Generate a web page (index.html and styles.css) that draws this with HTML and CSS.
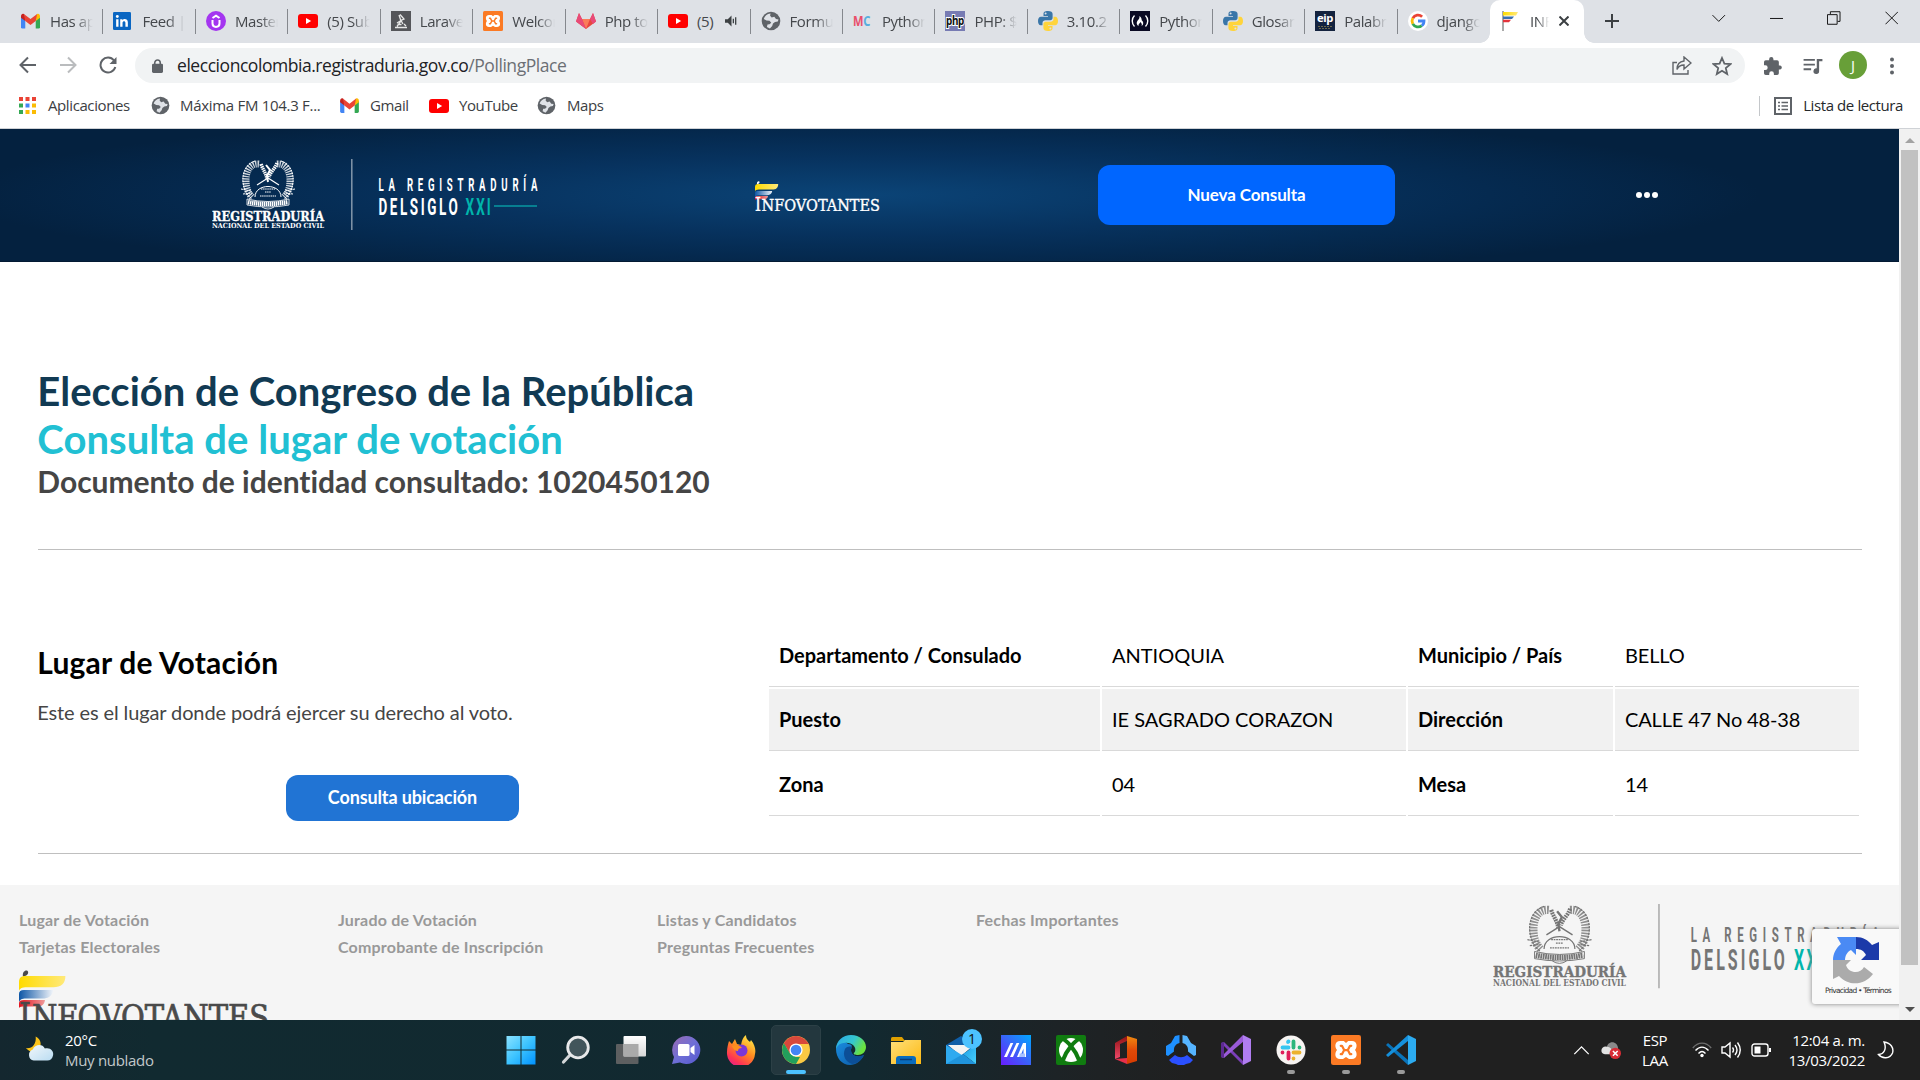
FILE: index.html
```html
<!DOCTYPE html>
<html lang="es">
<head>
<meta charset="utf-8">
<title>INFOVOTANTES</title>
<link rel="stylesheet" href="styles.css">
</head>
<body>
<svg class="defs" aria-hidden="true">
  <defs>
    <linearGradient id="gYellow"><stop offset="0" stop-color="#ffdb00"/><stop offset="1" stop-color="#ffe97a"/></linearGradient>
    <linearGradient id="gBlue"><stop offset="0" stop-color="#0d56a6"/><stop offset="1" stop-color="#f3f6fa"/></linearGradient>
    <linearGradient id="gRed"><stop offset="0" stop-color="#e3141e"/><stop offset="1" stop-color="#ef9a9a"/></linearGradient>
    <linearGradient id="gWin" x2="1" y2="1"><stop offset="0" stop-color="#8be3ff"/><stop offset=".5" stop-color="#3cc3ff"/><stop offset="1" stop-color="#0092ff"/></linearGradient>
    <linearGradient id="gView" x2="0" y2="1"><stop offset="0" stop-color="#fff"/><stop offset="1" stop-color="#d6d6d6"/></linearGradient>
    <linearGradient id="gChat" x2="1" y2="1"><stop offset="0" stop-color="#9a6bb0"/><stop offset=".5" stop-color="#6f6fd6"/><stop offset="1" stop-color="#5558cf"/></linearGradient>
    <linearGradient id="gFox" x1=".8" x2=".2" y2="1"><stop offset="0" stop-color="#fff04a"/><stop offset=".45" stop-color="#ff8a1f"/><stop offset=".8" stop-color="#ff3355"/><stop offset="1" stop-color="#e0208c"/></linearGradient>
    <linearGradient id="gEdge" x2="1" y2=".4"><stop offset="0" stop-color="#2aa7e8"/><stop offset=".6" stop-color="#35c6cf"/><stop offset="1" stop-color="#6be23f"/></linearGradient>
    <linearGradient id="gEdge2" x2="1" y2="1"><stop offset="0" stop-color="#1a8de0"/><stop offset="1" stop-color="#0c59a4"/></linearGradient>
    <linearGradient id="gFold" x2="1" y2="1"><stop offset="0" stop-color="#ffe07a"/><stop offset="1" stop-color="#fdb913"/></linearGradient>
    <linearGradient id="gMail" x2="1" y2="1"><stop offset="0" stop-color="#1d9ce6"/><stop offset="1" stop-color="#48d1fb"/></linearGradient>
    <linearGradient id="gArm" x1="0" y1="1" x2="1" y2="0"><stop offset="0" stop-color="#6a1cff"/><stop offset=".5" stop-color="#3a62f8"/><stop offset="1" stop-color="#00a8ff"/></linearGradient>
    <linearGradient id="gOff" x2="0" y2="1"><stop offset="0" stop-color="#ef8a10"/><stop offset=".5" stop-color="#e04a08"/><stop offset="1" stop-color="#d83b01"/></linearGradient>
    <linearGradient id="gOff2" x2="0" y2="1"><stop offset="0" stop-color="#8e1212"/><stop offset="1" stop-color="#f0486a"/></linearGradient>
    <linearGradient id="gCloud" x2="1" y2="1"><stop offset="0" stop-color="#f2f7fa"/><stop offset="1" stop-color="#b9dcf2"/></linearGradient>

    <symbol id="gmail" viewBox="0 0 20 16"><path fill="#4285f4" d="M0 3v11.5A1.500 1.500 0 0 0 1.500 16H4.500V6z"/><path fill="#34a853" d="M20 3v11.500a1.500 1.500 0 0 1-1.500 1.500h-3V6z"/><path fill="#c5221f" d="M0 3v1.500L4.500 8V3L3 .6C1.500-.3 0 1 0 3z"/><path fill="#fbbc04" d="M20 3v1.500L15.500 8V3L17 .6c1.500-.9 3 .4 3 2.400z"/><path fill="#ea4335" d="M3 .6 10 6l7-5.400L15.500 8 10 12.200 4.500 8z"/></symbol>
    <symbol id="youtube" viewBox="0 0 20 14"><rect width="20" height="14" rx="3" fill="#f00"/><path fill="#fff" d="m8 4 5.200 3L8 10z"/></symbol>
    <symbol id="globe" viewBox="0 0 20 20"><circle cx="10" cy="10" r="9.300" fill="#5f6368"/><path fill="#dfe2e7" d="M9.500 2.500C6 2.800 3.500 5 2.800 8l2.700 1.500 3 .3 1.800 1.900-1.800 1.600-2 .2-.6 2.500 3 1.500 2.300-2.500.8-2.500 2-1.500 2.800-.4.7-2.200-2.500-.3-1.700-2.400-2.600.8-1.600-1.700z"/></symbol>
    <symbol id="linkedin" viewBox="0 0 20 20"><rect width="20" height="20" rx="1.500" fill="#0a66c2"/><path fill="#fff" d="M3.500 8h2.600v8.500H3.500zM8 8h2.500v1.200c1.500-2.200 6-1.800 6 2.300v5h-2.700V12c0-2.600-3.200-2.200-3.200 0v4.500H8z"/><circle cx="4.800" cy="5" r="1.600" fill="#fff"/></symbol>
    <symbol id="udemy" viewBox="0 0 20 20"><circle cx="10" cy="10" r="10" fill="#a435f0"/><path fill="none" stroke="#fff" stroke-width="2" d="M6.500 9v3.500c0 4.500 7 4.500 7 0V9M6.500 7 10 4.600 13.500 7"/></symbol>
    <symbol id="lab" viewBox="0 0 20 20"><path fill="#55565a" d="M0 0h20v20H0z"/><path fill="none" stroke="#e8e8e8" stroke-width="1.300" d="M9 3.500 13 8l-3 1.500 2 3.500M8 4l2 6-4 5.500M4 16.500h12M10 9.500 6 12M13 13l2 2M6.500 13.500h4"/></symbol>
    <symbol id="xampp" viewBox="0 0 20 20"><rect width="20" height="20" rx="1.500" fill="#fb7a24"/><path fill="#fff" d="M6 4h2.500L10 5.300 11.500 4H14c3.500 0 3.800 4 2 6 1.800 2 1.500 6-2 6h-2L10 14.700 8 16H6c-3.500 0-3.800-4-2-6C2.200 8 2.500 4 6 4z"/><path fill="none" stroke="#fb7a24" stroke-width="1.500" stroke-linecap="round" stroke-linejoin="round" d="M6.500 7.200h.8L8.800 10l-1.500 2.800h-.8M13.500 7.200h-.8L11.200 10l1.500 2.800h.8M8.800 10h2.400"/></symbol>
    <symbol id="gitlab" viewBox="0 0 20 16"><path fill="#e8463f" d="M10 16 0 8.500 3 0l3 6h8l3-6 3 8.500z"/><path fill="#fb7c5a" d="M10 16 6 6h8z"/><path fill="#e84a78" d="M3 0 0 8.500 10 16 6 6zM17 0l3 8.500-3 2.500-3-5z"/></symbol>
    <symbol id="python" viewBox="0 0 20 20"><path fill="#3a76a8" d="M10 0C6.500 0 5.500 1.200 5.500 3v2H10v.8H3C1 5.800 0 7.500 0 10s1 4.300 2.700 4.300h1.800V12c0-1.800 1.300-2.800 3-2.800h4.800c1.400 0 2.300-1 2.300-2.400V3C14.600 1 13 0 10 0zM7.600 1.500a1 1 0 1 1 0 2 1 1 0 0 1 0-2z" fill-rule="evenodd"/><path fill="#ffd43b" d="M10 20c3.500 0 4.500-1.200 4.500-3v-2H10v-.8h7c2 0 3-1.700 3-4.200s-1-4.300-2.700-4.300h-1.800V8c0 1.800-1.300 2.800-3 2.800H7.700c-1.400 0-2.300 1-2.300 2.400V17c0 2 1.600 3 4.600 3zm2.400-1.500a1 1 0 1 1 0-2 1 1 0 0 1 0 2z" fill-rule="evenodd"/></symbol>
    <symbol id="fcc" viewBox="0 0 20 20"><path fill="#0a0a23" d="M0 0h20v20H0z"/><path fill="none" stroke="#fff" stroke-width="1.400" d="M4.500 4.500c-3 3-3 8 0 11M15.500 4.500c3 3 3 8 0 11"/><path fill="#fff" d="M8.500 15C5.500 13 7 10 8.500 8.500 9.500 7.500 9.700 6 9.300 5c2.200 1.200 2.400 3.200 2.400 4.200C14 11 13.500 14 11.500 15c1-2-.3-3-1-4-.5 1.500-2.500 2-2 4z"/></symbol>
    <symbol id="google" viewBox="0 0 20 20"><circle cx="10" cy="10" r="10" fill="#fff"/><g fill="none" stroke-width="2.800"><path stroke="#ea4335" d="M4.800 7.200a6 6 0 0 1 9.300-1.500"/><path stroke="#fbbc05" d="M4.800 7.200a6 6 0 0 0 0 5.600"/><path stroke="#34a853" d="M4.800 12.800a6 6 0 0 0 9 1.800"/><path stroke="#4285f4" d="M10 10h6c0 2-.8 3.700-2.200 4.600"/></g></symbol>
    <symbol id="flag" viewBox="0 0 16 20"><path stroke="#555" d="M1 0v20"/><path fill="url(#gYellow)" d="M1 1h15l-2 3.500H1z"/><path fill="#3a6fb0" d="M1 5.500h11L10 8H1z"/><path fill="#e3343c" d="M1 8.800h8l-2 2.400H1z"/></symbol>

    <symbol id="infovotantes" viewBox="0 0 125 30">
      <path fill="currentColor" d="M2 3.500C1.500 1 3 0 4 .3c.9.400.7 1.800-.2 2.300z"/>
      <path fill="url(#gYellow)" d="M0 11V6c0-2 1-3 3-3h20.200c0 4-2.200 5.600-6 5.600H4C1.500 8.600 0 9.300 0 11z"/>
      <path fill="url(#gBlue)" d="M0 16.500V12c0-1.300.8-2 2.500-2h14.700c-.5 3-2.500 4.300-5.500 4.300H3.500C1.500 14.300 0 15 0 16.500z"/>
      <path fill="url(#gRed)" d="M0 19v-2.300C0 15.500.8 15 2.500 15H13c-.3 2.300-1.600 3.300-4 3.300H3c-1.500 0-2.500 0-3 .7z"/>
      <g fill="currentColor" stroke="currentColor" stroke-width=".35" font-family="'DejaVu Serif Condensed','DejaVu Serif',serif">
        <text x="0" y="29.500" font-size="18.500" textLength="6" lengthAdjust="spacingAndGlyphs">I</text>
        <text x="6.500" y="29.500" font-size="16.300" textLength="118.500" lengthAdjust="spacingAndGlyphs">NFOVOTANTES</text>
      </g>
    </symbol>

    <symbol id="registraduria" viewBox="0 0 326 72">
      <g fill="none" stroke="currentColor">
        <path stroke-width="7" stroke-dasharray="1.400 1" opacity=".8" d="M47 5C37 4 34 14 34 21c0 8 2 13 6 17M65 5c10-1 13 9 13 16 0 8-2 13-6 17"/>
        <path stroke-width="1" stroke-dasharray="2 .7" d="M43 2c-9 3-13 12-12 21s5 14 9 17M69 2c9 3 13 12 12 21s-5 14-9 17M29 30l10 2M83 30l-10 2M31 35l9-1M81 35l-9-1"/>
        <path stroke-width="3.500" stroke-dasharray="1.500 .7" d="M49 5c2 6 5 9 6 15M65 4c-2 6-6 8-8 14"/>
        <path stroke-width="2" d="M54 6l4 5-3 6 1 6"/>
        <path stroke-width="1.200" d="M45 26l11-7 11 7"/>
        <path stroke-width="1" d="M43 38c0-14 26-14 26 0"/>
        <path stroke-width="1" stroke-dasharray="1.500 .6" d="M49 30h14M53 33h6M48 37h16"/>
        <path stroke-width="4.500" stroke-dasharray="1.500 .5" d="M36 43q20 4 40 0"/>
        <path stroke-width=".8" d="M35 40q21 5 42 0v6q-21 4-42 0zM50 48q6 4 12 0"/>
      </g>
      <g fill="currentColor" font-family="'DejaVu Serif','Liberation Serif',serif" font-weight="700">
        <text x="0" y="61.500" font-size="12.500" stroke="currentColor" stroke-width=".3" textLength="112" lengthAdjust="spacingAndGlyphs">REGISTRADURÍA</text>
        <text x="0" y="69" font-size="7" textLength="112" lengthAdjust="spacingAndGlyphs">NACIONAL DEL ESTADO CIVIL</text>
      </g>
      <path stroke="currentColor" opacity=".5" d="M139.800 0v71" stroke-width="1.500"/>
      <g font-family="Roboto,sans-serif" font-weight="700">
        <g transform="translate(166.500 32) scale(.55 1)"><text font-size="17.500" fill="currentColor" textLength="289" lengthAdjust="spacing">LA REGISTRADURÍA</text></g>
        <g transform="translate(166.500 56) scale(.55 1)"><text font-size="24.500" fill="currentColor" textLength="144" lengthAdjust="spacing">DELSIGLO</text></g>
        <g transform="translate(253.500 56) scale(.55 1)"><text font-size="24.500" class="accent" textLength="46" lengthAdjust="spacing">XXI</text></g>
      </g>
      <path class="accent-line" stroke-width="1.800" d="M282 47h43"/>
    </symbol>
  </defs>
</svg>

<div class="screen">
  <div class="tabstrip">
    <div class="tabs">
      <div class="tab"><svg class="fav"><use href="#gmail" y="2" width="19" height="16"/></svg><span>Has ap</span></div>
      <div class="tab"><svg class="fav"><use href="#linkedin" y="1" width="18" height="18"/></svg><span>Feed |</span></div>
      <div class="tab"><svg class="fav"><use href="#udemy"/></svg><span>Master</span></div>
      <div class="tab"><svg class="fav"><use href="#youtube" y="3" width="20" height="14"/></svg><span>(5) Sub</span></div>
      <div class="tab"><svg class="fav"><use href="#lab"/></svg><span>Larave</span></div>
      <div class="tab"><svg class="fav"><use href="#xampp"/></svg><span>Welcom</span></div>
      <div class="tab"><svg class="fav"><use href="#gitlab" y="2" width="20" height="16"/></svg><span>Php to</span></div>
      <div class="tab audio"><svg class="fav"><use href="#youtube" y="3" width="20" height="14"/></svg><span>(5)</span><svg class="spk" viewBox="0 0 14 12"><path fill="#3c4043" d="M0 4h3l4-4v12L3 8H0z"/><path fill="none" stroke="#3c4043" stroke-width="1.400" d="M9 3.500v5M11.500 2v8"/></svg></div>
      <div class="tab"><svg class="fav"><use href="#globe"/></svg><span>Formu</span></div>
      <div class="tab"><svg class="fav"><text x="0" y="15" class="mc" textLength="17" lengthAdjust="spacingAndGlyphs"><tspan fill="#e94f6b">M</tspan><tspan fill="#58aede">C</tspan></text></svg><span>Python</span></div>
      <div class="tab"><svg class="fav"><path fill="#777bb3" d="M0 0h20v20H0z"/><text x="1" y="14" class="php" textLength="18" lengthAdjust="spacingAndGlyphs">php</text></svg><span>PHP: $</span></div>
      <div class="tab"><svg class="fav"><use href="#python"/></svg><span>3.10.2</span></div>
      <div class="tab"><svg class="fav"><use href="#fcc"/></svg><span>Python</span></div>
      <div class="tab"><svg class="fav"><use href="#python"/></svg><span>Glosar</span></div>
      <div class="tab"><svg class="fav"><path fill="#14233f" d="M0 0h20v20H0z"/><text x="2" y="11" class="eip" textLength="16" lengthAdjust="spacingAndGlyphs">eip</text><path stroke="#6d6a4c" stroke-dasharray="2 1" d="M3 15.500h14M4 17.500h11"/></svg><span>Palabr</span></div>
      <div class="tab last"><svg class="fav"><use href="#google"/></svg><span>django</span></div>
      <div class="tab active"><svg class="fav"><use href="#flag" width="16" height="20"/></svg><span>INF</span><svg class="x" viewBox="0 0 10 10"><path stroke="#3c4043" stroke-width="2" d="M.5.5l9 9M9.500.5l-9 9"/></svg></div>
    </div>
    <svg class="plus" viewBox="0 0 14 14"><path stroke="#3c4043" stroke-width="2" d="M7 0v14M0 7h14"/></svg>
    <div class="winctl">
      <svg viewBox="0 0 14 14"><path d="M.5 4l6.500 6.500L13.500 4"/></svg>
      <svg viewBox="0 0 14 14"><path d="M0 7.500h14"/></svg>
      <svg viewBox="0 0 14 14"><path d="M.5 3.500h10v10H.5zM3.500 3V.5h10v10H11"/></svg>
      <svg viewBox="0 0 14 14"><path d="M.5.5l13 13M13.500.5l-13 13"/></svg>
    </div>
  </div>

  <div class="toolbar">
    <div class="nav">
      <svg viewBox="0 0 18 18"><path stroke="#5f6368" d="M17 9H2M9 1.500 1.500 9 9 16.500"/></svg>
      <svg viewBox="0 0 18 18"><path stroke="#babcbe" d="M1 9h15M9 1.500 16.500 9 9 16.500"/></svg>
      <svg viewBox="0 0 18 18"><path stroke="#5f6368" d="M15 4.500A7.500 7.500 0 1 0 16.300 11"/><path fill="#5f6368" d="M17.500 1v7h-7z"/></svg>
    </div>
    <div class="omnibox">
      <svg class="lock" viewBox="0 0 12 15"><rect y="5" width="12" height="10" rx="1.500" fill="#5f6368"/><path fill="none" stroke="#5f6368" stroke-width="1.700" d="M3 6V4a3 3 0 0 1 6 0v2"/></svg>
      <span class="url">eleccioncolombia.registraduria.gov.co<i>/PollingPlace</i></span>
      <svg class="share" viewBox="0 0 20 19"><path d="M5 6.500H1V18h15v-4M12 5V1l7 6-7 6V9c-3 0-5.500 1-7 4.500C5 8.500 8 5.500 12 5z"/></svg>
      <svg class="star" viewBox="0 0 20 20"><path d="m10 2 2.400 5.600 6 .5-4.600 4 1.400 5.900-5.200-3.200L4.800 18l1.400-5.900-4.600-4 6-.5z"/></svg>
    </div>
    <svg class="puzzle" viewBox="0 0 20 20"><path fill="#5f6368" d="M18 9.500h-1.500v-4a2 2 0 0 0-2-2h-4V2.500a2.400 2.400 0 0 0-4.800 0v1H2a2 2 0 0 0-2 2v3.800h1.500a2.600 2.600 0 0 1 0 5.200H0V18a2 2 0 0 0 2 2h3.800v-1.500a2.600 2.600 0 0 1 5.200 0V20h3.500a2 2 0 0 0 2-2v-4H18a2.300 2.300 0 0 0 0-4.500z"/></svg>
    <svg class="playlist" viewBox="0 0 20 17"><path stroke="#5f6368" stroke-width="2" d="M0 2h12M0 7h12M0 12h8"/><path fill="#5f6368" d="M14 1h6v2.500h-3.500V14a3 3 0 1 1-2.500-3z"/></svg>
    <span class="avatar">J</span>
    <svg class="kebab" viewBox="0 0 4 18"><circle cx="2" cy="2.500" r="2"/><circle cx="2" cy="9" r="2"/><circle cx="2" cy="15.500" r="2"/></svg>
  </div>

  <div class="bookmarks">
    <svg class="apps" viewBox="0 0 17 17"><path fill="#ea4335" d="M0 0h4v4H0zM6.500 0h4v4h-4zM13 0h4v4h-4z"/><path fill="#34a853" d="M0 6.500h4v4H0zM0 13h4v4H0z"/><path fill="#4285f4" d="M6.500 6.500h4v4h-4z"/><path fill="#fbbc04" d="M13 6.500h4v4h-4zM6.500 13h4v4h-4zM13 13h4v4h-4z"/></svg><span class="bm b1">Aplicaciones</span>
    <svg class="ic"><use href="#globe" width="19" height="19"/></svg><span class="bm b2">Máxima FM 104.3 F...</span>
    <svg class="ic"><use href="#gmail" y="2" width="19" height="15"/></svg><span class="bm b3">Gmail</span>
    <svg class="ic"><use href="#youtube" y="3" width="20" height="14"/></svg><span class="bm b4">YouTube</span>
    <svg class="ic"><use href="#globe" width="19" height="19"/></svg><span class="bm b5">Maps</span>
    <div class="reading"><svg viewBox="0 0 18 18"><path fill="none" stroke="#5f6368" stroke-width="2" d="M1 1h16v16H1z"/><path stroke="#5f6368" stroke-width="1.600" d="M4 5.500h2M7.500 5.500H14M4 9h2M7.500 9H14M4 12.500h2M7.500 12.500H14"/></svg><span>Lista de lectura</span></div>
  </div>

  <div class="viewport">
    <div class="page">
      <header class="site-header">
        <svg class="reg"><use href="#registraduria"/></svg>
        <svg class="info"><use href="#infovotantes"/></svg>
        <a class="btn-new">Nueva Consulta</a>
        <span class="more"><b></b><b></b><b></b></span>
      </header>
      <main>
        <section class="titles">
          <h1>Elección de Congreso de la República</h1>
          <h2>Consulta de lugar de votación</h2>
          <h3>Documento de identidad consultado: 1020450120</h3>
        </section>
        <section class="place">
          <div class="intro">
            <h4>Lugar de Votación</h4>
            <p>Este es el lugar donde podrá ejercer su derecho al voto.</p>
            <a class="btn-loc">Consulta ubicación</a>
          </div>
          <table>
            <colgroup><col class="c1"><col class="c2"><col class="c3"><col class="c4"></colgroup>
            <tr><th>Departamento / Consulado</th><td>ANTIOQUIA</td><th>Municipio / País</th><td>BELLO</td></tr>
            <tr class="alt"><th>Puesto</th><td>IE SAGRADO CORAZON</td><th>Dirección</th><td>CALLE 47 No 48-38</td></tr>
            <tr><th>Zona</th><td>04</td><th>Mesa</th><td>14</td></tr>
          </table>
        </section>
      </main>
      <footer>
        <div class="links">
          <ul><li>Lugar de Votación</li><li>Tarjetas Electorales</li></ul>
          <ul><li>Jurado de Votación</li><li>Comprobante de Inscripción</li></ul>
          <ul><li>Listas y Candidatos</li><li>Preguntas Frecuentes</li></ul>
          <ul><li>Fechas Importantes</li></ul>
          <svg class="info-lg"><use href="#infovotantes"/></svg>
        </div>
        <svg class="reg-lg"><use href="#registraduria"/></svg>
      </footer>
      <div class="captcha">
        <svg viewBox="0 0 46 47"><path fill="#1c3aa9" d="M46 5v18H28l5-5c-2-4-5-6-10-6V0c7 0 12 3 16 8z"/><path fill="#4a8af4" d="M4 0h19v18l-5-5c-4 2-6 6-6 10H0c0-6 3-12 8-16z"/><path fill="#ababab" d="M0 42V23h18l-5 5c2 8 14 10 18 2l9 7c-8 11-24 13-34 2z"/></svg>
        <span>Privacidad • Términos</span>
      </div>
    </div>
    <div class="scrollbar">
      <svg viewBox="0 0 10 5"><path fill="#a3a3a3" d="M0 5l5-5 5 5z"/></svg>
      <div class="thumb"></div>
      <svg viewBox="0 0 10 5"><path fill="#505050" d="M0 0l5 5 5-5z"/></svg>
    </div>
  </div>

  <div class="taskbar">
    <div class="weather">
      <svg viewBox="0 0 30 26"><path fill="#fcc419" d="M10 0c6 3 7 10 2 14-4 3-9 2-12-2 6 1 11-4 10-12z"/><path fill="url(#gCloud)" d="M8 25a6 6 0 0 1-1-11.500C9 8 17 7 19.500 12.500 25 11 29 15 28 19.500 27.500 23 25 25 22 25z"/></svg>
      <div><b>20°C</b><span>Muy nublado</span></div>
    </div>
    <div class="apps-row">
      <div><svg viewBox="0 0 30 30"><path fill="url(#gWin)" d="M.5 1h14v13.500H.5zM15.500 1h14v13.500h-14zM.5 15.500h14V29.500H.5zM15.500 15.500h14v14h-14z"/></svg></div>
      <div><svg viewBox="0 0 30 30"><path stroke="#d3d6d8" stroke-width="3.200" stroke-linecap="round" d="M2.500 27l7-7.500"/><circle cx="17" cy="12.500" r="10.300" fill="#42555b" stroke="#e8e9ea" stroke-width="2.800"/></svg></div>
      <div><svg viewBox="0 0 30 30"><rect y="9" width="22.500" height="20" rx="1" fill="#5d5f60"/><rect x="7.500" y="1" width="22.500" height="20.500" rx="1" fill="url(#gView)"/><path fill="#aaa" d="M7.500 9h15v12.500h-15z"/></svg></div>
      <div><svg viewBox="0 0 30 30"><path fill="url(#gChat)" d="M15 1a14 14 0 1 1-6 26.500L1 29l2-7A14 14 0 0 1 15 1z"/><rect x="7" y="9" width="11.500" height="12" rx="1.500" fill="#fff"/><path fill="#fff" d="m19.500 13 4-3v10l-4-3z"/></svg></div>
      <div><svg viewBox="0 0 30 30"><path fill="url(#gFox)" d="M3 6l3 3 3-5 2 5 4 1c1-5 2-8 5-10 0 4 2 5 4 7l1-2c4 5 5 10 4 14a14 14 0 0 1-28-2C1 13 2 9 3 6z"/><circle cx="15.500" cy="15.500" r="6" fill="#7a36d8"/><path fill="#ff8f1f" d="M6 11c4-2 8-1 10 2-3 0-4 1-4 3-3 0-5-2-6-5z"/></svg></div>
      <div class="on"><svg viewBox="0 0 30 30"><circle cx="15" cy="15" r="14" fill="#fbc943"/><path fill="#d8483c" d="M2.900 8A14 14 0 0 1 27.100 8H15L9 18.500z"/><path fill="#22a05c" d="M2.900 8 9 18.500l6 3.500h4L15 29A14 14 0 0 1 2.900 8z"/><path fill="#d8483c" d="M2.900 8h24.200L28 9H15v5l-6 3z"/><circle cx="15" cy="15" r="6.600" fill="#fff"/><circle cx="15" cy="15" r="5.300" fill="#4285f4"/></svg></div>
      <div><svg viewBox="0 0 30 30"><path fill="url(#gEdge2)" d="M0 14C1 6 7 4 12 9c6 0 3 4 3 6 0 6 7 8 13 5-3 6-8 10-14 10C6 30 0 23 0 14z"/><path fill="#0c4f97" d="M9 14c-3 7 1 13 7 15 5 0 10-4 12-9-6 3-13 1-13-5 0-1 .5-2 1-3-3-1-6 0-7 2z"/><path fill="url(#gEdge)" d="M0 14C0 6 7 0 15 0c9 0 15 6 15 12 0 5-4 8-8 8-3 0-5-1-4-2 3-3 1-9-6-10C6 7 2 9 0 14z"/></svg></div>
      <div><svg viewBox="0 0 30 30"><path fill="#e0a000" d="M0 3.500Q0 2 1.500 2H11l3 4H0z"/><path fill="url(#gFold)" d="M0 7h12l2-2h16v24H0z"/><path fill="#0a6cbd" d="M5 29v-5q0-3 3-3h14q3 0 3 3v5z"/><path stroke="#0a3c78" stroke-width="1.500" d="M9 24.500h12"/></svg></div>
      <div><svg viewBox="0 0 30 30"><path fill="#0f5ea8" d="M0 10 15 1l15 9v5H0z"/><path fill="#f3f3f3" d="M2 10h26L15 21z"/><path fill="#2faaf0" d="M0 10 30 29H0z"/><path fill="url(#gMail)" d="M30 10v19L17 19z"/><path fill="#2094dc" d="M0 29 30 29 17 19z"/></svg><em>1</em></div>
      <div><svg viewBox="0 0 30 30"><path fill="url(#gArm)" d="M0 0h30v30H0z"/><path fill="#fff" d="M3 22 9.500 8h2.800L6 22zM9 22l6.500-14h2.800L12 22zM16 22l6-14h3v14h-2.500v-8.500L19 22z"/><path fill="#a9c2ff" d="M19 18.500h5V22h-6z"/></svg></div>
      <div><svg viewBox="0 0 30 30"><rect width="30" height="30" rx="2" fill="#107c10"/><circle cx="15" cy="15" r="12" fill="#fff"/><path fill="none" stroke="#107c10" stroke-width="4" d="M7 4c4 2 12 10 16 21M23 4C19 6 11 14 7 25"/></svg></div>
      <div><svg viewBox="0 0 30 30"><path fill="url(#gOff2)" d="M16 1v5l-7 3v13l-5 2V8z"/><path fill="url(#gOff)" d="M16 1l10 3v22l-10 3z"/><path fill="#e8304a" d="m4 24 12-1v6z"/></svg></div>
      <div><svg viewBox="0 0 30 30"><path fill="#1e90ff" d="M9 1l4.500-1v8C9.500 9 7.500 12 8 16.500L2 21l-2-1v-9l5-3z"/><path fill="#55b4ff" d="M21 1l-4.500-1v8c4 1 6 4 5.500 8.500l6 4.500 2-1v-9l-5-3z"/><path fill="#2b50ff" d="M3 25l6-5c4 3 8 3 12 0l6 5-3 3-4 1-2 1h-6l-2-1-4-1z"/></svg></div>
      <div><svg viewBox="0 0 30 30"><path fill="#7b3fb8" d="m0 8 3-1 20 20-1 3z"/><path fill="#9a5bd8" d="m0 22 3 1L23 6l-1-6z"/><path fill="#5c2a91" d="M0 8v14l3 1V7z"/><path fill="#b07df0" d="m22 0 8 4v22l-8 4z"/></svg></div>
      <div class="dot"><svg viewBox="0 0 30 30"><circle cx="15" cy="15" r="14.500" fill="#f7f4f2"/><g stroke-width="3.800" stroke-linecap="round"><path stroke="#36c5f0" d="M12.500 6.500v0M6.500 12.500h6M12 7v0"/><path stroke="#2eb67d" d="M17.500 6.500v6M23.500 12.500v0"/><path stroke="#ecb22e" d="M17.500 17.500h6M17.500 23.500v0"/><path stroke="#e01e5a" d="M12.500 17.500v6M6.500 17.500v0"/></g></svg></div>
      <div class="dot"><svg viewBox="0 0 20 20"><use href="#xampp" width="20" height="20"/></svg></div>
      <div class="dot"><svg viewBox="0 0 30 30"><path fill="#0a74ba" d="m0 10 2-2 20 17v5z"/><path fill="#1590dc" d="m0 20 2 2L22 6V0z"/><path fill="#2cabf0" d="m22 0 8 4v22l-8 4z"/></svg></div>
    </div>
    <div class="tray">
      <svg class="t-up" viewBox="0 0 18 10"><path d="m1 9 8-8 8 8"/></svg>
      <svg class="t-cloud" viewBox="0 0 22 20"><path fill="#8a8a8a" d="M6 8c0-9 12-9 12 1l-6 4z"/><path fill="#e2e2e2" d="M4 14C-2 13 0 5 6 6c5 0 6 4 8 8z"/><circle cx="15" cy="13" r="6" fill="#d92c35"/><path stroke="#fff" stroke-width="1.600" d="m12.500 10.500 5 5M17.500 10.500l-5 5"/></svg>
      <div class="lang">ESP<br>LAA</div>
      <svg class="t-wifi" viewBox="0 0 20 16"><path opacity=".35" d="M.8 6C6-.5 14-.5 19.200 6"/><path d="M3.500 8.500c4-4.500 9-4.500 13 0M6.500 11.500c2.500-2.700 4.500-2.700 7 0"/><circle cx="10" cy="13.500" r="1.700" fill="#fff" stroke="none"/></svg>
      <svg class="t-vol" viewBox="0 0 20 18"><path d="M1 6h3l5-4v14l-5-4H1zM11.500 6.500q2 2.500 0 5M14 4q4 5 0 10M16.500 1.500q5.500 7.500 0 15"/></svg>
      <svg class="t-bat" viewBox="0 0 20 14"><rect x="1" y="1" width="16" height="12" rx="2.500"/><path fill="#fff" stroke="none" d="M3.500 3.500h6v7h-6zM18 5h2v4h-2z"/></svg>
      <div class="clock">12:04 a. m.<br>13/03/2022</div>
      <svg class="t-moon" viewBox="0 0 17 18"><path d="M7 1c7 1 10 6 8.500 11C13 18 5 18 1.500 13.500 7 13 10 8 7 1z"/></svg>
    </div>
  </div>
</div>
</body>
</html>
```

FILE: styles.css
```css
* { box-sizing: border-box; }
body { margin: 0; overflow: hidden; font-family: "Open Sans", sans-serif; }
.defs { position: absolute; width: 0; height: 0; }
.screen { width: 1920px; height: 1080px; display: flex; flex-direction: column; background: #fff; overflow: hidden; }
svg { display: block; flex: none; }

/* Tab strip */
.tabstrip { height: 43px; flex: none; background: #dee1e6; display: flex; align-items: center; padding-left: 11px; color: #45484c; font-size: 15px; letter-spacing: -.4px; }
.tabs { display: flex; height: 43px; }
.tab { width: 92.450px; height: 43px; padding-left: 10px; padding-bottom: 2px; display: flex; align-items: center; background: linear-gradient(#85888d, #85888d) right 9px / 1.5px 25px no-repeat; background-position: right -.5px top 9px; }
.tab.last { background: none; }
.tab .fav { width: 20px; height: 20px; }
.tab span { margin-left: 9px; width: 43px; overflow: hidden; white-space: nowrap; -webkit-mask-image: linear-gradient(90deg, #000 60%, transparent); mask-image: linear-gradient(90deg, #000 60%, transparent); }
.tab.audio span { width: 18px; -webkit-mask-image: none; mask-image: none; }
.spk { width: 13px; height: 12px; margin-left: 10px; }
.tab.active { width: 94px; background: #fff; border-radius: 10px 10px 0 0; padding-left: 12px; position: relative; }
.tab.active::before, .tab.active::after { content: ""; position: absolute; bottom: 0; width: 10px; height: 10px; }
.tab.active::before { left: -10px; background: radial-gradient(circle at 0 0, transparent 9.500px, #fff 10px); }
.tab.active::after { right: -10px; background: radial-gradient(circle at 100% 0, transparent 9.500px, #fff 10px); }
.tab.active span { width: 19px; margin-left: 8px; -webkit-mask-image: linear-gradient(90deg, #000 40%, transparent); mask-image: linear-gradient(90deg, #000 40%, transparent); }
.tab .x { width: 10px; height: 10px; margin-left: 10px; }
.mc { font: 700 14px "Noto Sans", sans-serif; }
.php { font: 700 12px "Noto Sans", sans-serif; fill: #111; stroke: #fff; stroke-width: 2px; paint-order: stroke; }
.eip { font: 700 11px "Noto Sans", sans-serif; fill: #fff; }
.plus { width: 14px; height: 14px; margin-left: 21px; margin-bottom: 1px; }
.winctl { margin-left: auto; display: flex; gap: 44px; padding-right: 22px; margin-bottom: 7px; }
.winctl svg { width: 13.500px; height: 14px; fill: none; stroke: #111; stroke-width: 1; }

/* Toolbar */
.toolbar { height: 45px; flex: none; display: flex; align-items: center; }
.nav { display: flex; gap: 22px; width: 135px; padding-left: 19px; padding-bottom: 1px; }
.nav svg { width: 18px; height: 18px; fill: none; stroke-width: 2; }
.omnibox { width: 1610px; height: 35px; border-radius: 18px; background: #f1f3f4; display: flex; align-items: center; padding-left: 17px; }
.lock { width: 11px; height: 14px; }
.url { margin-left: 14px; padding-bottom: 2px; font-size: 17.500px; letter-spacing: -.45px; color: #202124; white-space: nowrap; }
.url i { font-style: normal; color: #6b6f74; }
.share { width: 20px; height: 19px; margin-left: auto; fill: none; stroke: #5f6368; stroke-width: 1.400; }
.star { width: 20px; height: 20px; margin: 0 13px 0 20px; fill: none; stroke: #5f6368; stroke-width: 1.800; }
.puzzle { width: 18px; height: 18px; margin-left: 19px; }
.playlist { width: 20px; height: 16px; margin-left: 21px; }
.avatar { width: 28px; height: 28px; border-radius: 50%; background: #689f38; color: #fff; font-size: 15px; line-height: 28px; text-align: center; margin-left: 16px; margin-bottom: 1px; }
.kebab { width: 4px; height: 18px; margin-left: 23px; fill: #5f6368; }

/* Bookmarks */
.bookmarks { height: 41px; flex: none; display: flex; align-items: center; padding: 0 17px 5px 19px; font-size: 15px; letter-spacing: -.4px; color: #3c4043; border-bottom: 1px solid #cfd2d6; }
.apps { width: 17px; height: 17px; }
.ic { width: 20px; height: 19px; }
.bm { margin-left: 12px; padding-bottom: 1px; white-space: nowrap; }
.b1 { width: 103px; }
.b2 { width: 160px; letter-spacing: -.3px; margin-left: 9px; }
.b3 { width: 59px; margin-left: 10px; }
.b4 { width: 78px; margin-left: 10px; }
.b5 { margin-left: 10px; }
.reading { margin-left: auto; height: 20px; padding-left: 14px; border-left: 1px solid #c4c7ca; display: flex; align-items: center; gap: 11px; white-space: nowrap; color: #25282b; }
.reading svg { width: 18px; height: 18px; }
.reading span { padding-bottom: 1px; }

/* Page */
.viewport { height: 891px; flex: none; display: flex; }
.page { width: 1899px; height: 891px; overflow: hidden; position: relative; font-family: Lato, sans-serif; }
.site-header { height: 133px; display: flex; align-items: center; padding-left: 212px; border-bottom: 1px solid #031a33; background: radial-gradient(ellipse 900px 86px at 860px 66px, #0b4477 0, #07325e 45%, #052a50 70%, #04213f 100%); }
.reg { width: 326px; height: 72px; color: #fff; }
.accent { fill: #00b5ab; }
.accent-line { stroke: #077f91; }
.info { width: 125px; height: 30px; margin: 2px 0 0 217px; color: #fff; }
.btn-new { width: 297px; height: 60px; padding-bottom: 2px; margin-left: 218px; border-radius: 12px; background: #0066ff; color: #fff; font-weight: 700; font-size: 17px; letter-spacing: -.12px; display: flex; align-items: center; justify-content: center; }
.more { margin-left: 241px; display: flex; gap: 2px; }
.more b { width: 6px; height: 6px; border-radius: 50%; background: #fff; }
main { height: 623px; padding: 105px 37px 0 38px; }
h1, h2, h3, h4, p, ul { margin: 0; padding: 0; }
.titles { height: 183px; border-bottom: 1px solid #bfbfbf; }
h1, h2, h3, h4, .intro p { margin-left: -.7px; }
h1, h2 { font-size: 40px; line-height: 48px; font-weight: 700; letter-spacing: -.02px; color: #113a53; }
h2 { color: #21c0d3; letter-spacing: .05px; }
h3 { font-size: 30px; line-height: 36px; font-weight: 700; color: #454545; letter-spacing: -.02px; }
.place { height: 304px; border-bottom: 1px solid #bfbfbf; display: flex; }
.intro { width: 729px; padding-top: 94px; }
h4 { font-size: 30px; line-height: 36px; font-weight: 700; color: #000; letter-spacing: .18px; }
.intro p { font-size: 20px; line-height: 24px; margin-top: 20px; color: #454545; letter-spacing: -.12px; }
.btn-loc { margin: 51px 0 0 248px; width: 233px; height: 46px; padding-bottom: 2px; border-radius: 12px; background: #2174d4; color: #fff; font-weight: 700; font-size: 18px; letter-spacing: -.12px; display: flex; align-items: center; justify-content: center; }
table { table-layout: fixed; width: 1094px; height: 196px; margin-top: 72px; border-spacing: 2px; font-size: 20px; line-height: 24px; }
.c1 { width: 331px; } .c2 { width: 304px; } .c3 { width: 205px; } .c4 { width: 244px; }
th, td { padding: 0 10px; text-align: left; border-bottom: 1px solid #d9d9d9; height: 62.500px; white-space: nowrap; }
th { font-weight: 700; }
td:last-child { letter-spacing: -.15px; }
.alt th, .alt td { background: #f1f1f1; }
footer { height: 135px; background: #f5f5f5; display: flex; padding-left: 19px; overflow: hidden; }
.links { width: 1474px; display: grid; grid-template-columns: repeat(4, 319px); grid-template-rows: 85px 60px; padding-top: 0; }
.links ul { list-style: none; padding-top: 21px; font-size: 16px; font-weight: 700; line-height: 27px; letter-spacing: .19px; color: #999; }
.info-lg { width: 250px; height: 60px; color: #4a4a4a; }
.reg-lg { width: 387px; height: 85.500px; margin-top: 19px; color: #757575; }
.reg-lg .accent { fill: #5cc9b9; }
.captcha { position: absolute; left: 1812px; top: 800px; width: 100px; height: 75px; background: #f9f9f9; border-radius: 3px; box-shadow: 0 0 5px #808080; padding: 8px 0 0 13px; }
.captcha svg { width: 46px; height: 47px; margin-left: 8px; }
.captcha span { display: block; font: 7.500px/10px "DejaVu Sans", sans-serif; color: #333; margin-top: 2px; white-space: nowrap; letter-spacing: -.75px; }
.scrollbar { width: 21px; background: #f1f1f1; display: flex; flex-direction: column; align-items: center; padding: 9px 0 8px; }
.scrollbar svg { width: 10px; height: 5px; }
.thumb { width: 17px; height: 815px; margin: 7px 0 auto; background: #c1c1c1; }

/* Taskbar */
.taskbar { height: 60px; flex: none; position: relative; display: flex; align-items: center; background: linear-gradient(90deg, #14272f 0, #112a30 8%, #122930 45%, #1d2326 55%, #202020 62%); color: #fff; }
.weather { width: 493px; padding-left: 26px; display: flex; align-items: center; gap: 10px; letter-spacing: -.3px; font-size: 15px; line-height: 20px; }
.weather svg { width: 29px; height: 26px; margin-top: -2px; }
.weather b, .weather span { display: block; font-weight: 400; }
.weather span { color: #c2c8ca; }
.apps-row { display: flex; align-items: center; }
.apps-row div { width: 55px; height: 50px; display: flex; align-items: center; justify-content: center; position: relative; }
.apps-row svg { width: 30px; height: 30px; }
.apps-row .on { width: 50px; margin: 0 2.500px; background: #23373e; border: 1px solid #2c4046; border-radius: 5px; }
.apps-row .on::after, .dot::after { content: ""; position: absolute; bottom: 0; left: 14px; width: 20px; height: 4px; border-radius: 2px; background: #4cc2ff; }
.apps-row .dot::after { left: 23.500px; width: 8px; bottom: 1px; background: #9a9a9a; }
.apps-row em { position: absolute; left: 29px; top: 4px; width: 20px; height: 20px; border-radius: 50%; background: #4cc2ff; color: #111; font: 14px/20px "Open Sans", sans-serif; text-align: center; }
.tray { margin-left: auto; display: flex; align-items: center; padding-right: 26px; font-size: 15px; line-height: 20px; letter-spacing: -.3px; }
.tray div { padding-bottom: 1px; }
.tray svg { fill: none; stroke: #fff; stroke-width: 1.400; }
.tray .t-cloud { stroke: none; }
.t-up { width: 17px; height: 9px; }
.t-cloud { width: 21px; height: 19px; margin-left: 11px; }
.lang { width: 50px; margin-left: 8px; text-align: center; }
.t-wifi { width: 20px; height: 16px; margin-left: 12px; }
.t-vol { width: 20px; height: 18px; margin-left: 9px; }
.t-bat { width: 20px; height: 14px; margin-left: 10px; }
.clock { width: 85px; margin-left: 9px; text-align: right; white-space: nowrap; }
.t-moon { width: 17px; height: 18px; margin-left: 12px; }
```
